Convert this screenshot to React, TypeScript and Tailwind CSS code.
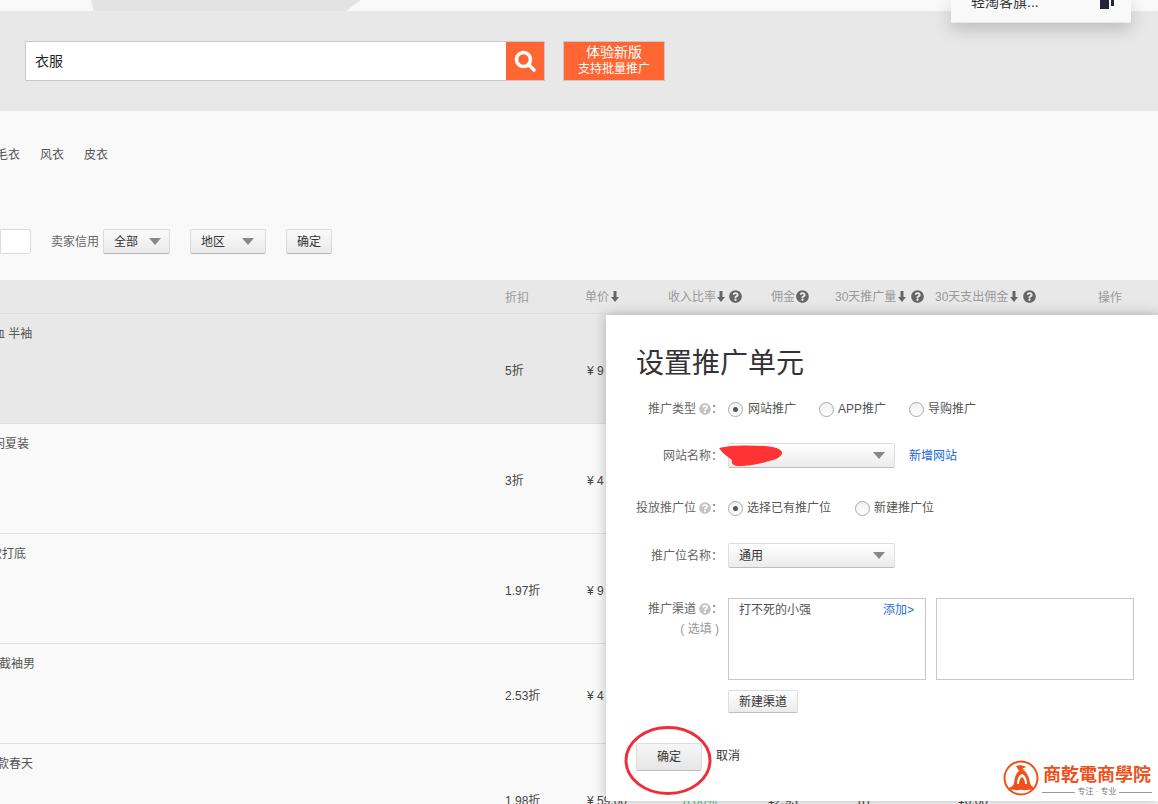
import React from "react";
import { FaQuestionCircle } from "react-icons/fa";

const font = "[font-family:'Liberation_Sans','Noto_Sans_CJK_SC',sans-serif]";

function Arrow() {
  return (
    <svg width="8" height="11" viewBox="0 0 8 11" className="inline-block">
      <path d="M2.5 0h3v6H8L4 11 0 6h2.5z" fill="#666" />
    </svg>
  );
}

function Q({ c = "#666", s = 13 }: { c?: string; s?: number }) {
  return <FaQuestionCircle size={s} color={c} className="inline-block" />;
}

function Caret() {
  return (
    <svg width="12" height="7" viewBox="0 0 12 7">
      <path d="M0 0h12L6 7z" fill="#888" />
    </svg>
  );
}

function Radio({ on }: { on?: boolean }) {
  return (
    <span className="flex h-[15px] w-[15px] shrink-0 items-center justify-center rounded-full border border-[#a8a8a8] bg-gradient-to-b from-[#f0f0f0] to-white">
      {on && <span className="h-[5px] w-[5px] rounded-full bg-[#555]" />}
    </span>
  );
}

const rows = [
  { t: "血 半袖", off: "-ml-[7px]", d: "5折", p: "9", h: "h-[110px]", dt: "pt-[48px]", a: true },
  { t: "闲夏装", off: "-ml-[7px]", d: "3折", p: "4", h: "h-[110px]", dt: "pt-[48px]" },
  { t: "款打底", off: "-ml-[10px]", d: "1.97折", p: "9", h: "h-[110px]", dt: "pt-[48px]" },
  { t: "截袖男", off: "-ml-[1px]", d: "2.53折", p: "4", h: "h-[100px]", dt: "pt-[43px]" },
  { t: "款春天", off: "-ml-[3px]", d: "1.98折", p: "59.00", h: "h-[61px]", dt: "pt-[48px]", extra: { r: "8.00%", c: "¥2.93", n: "81", o: "¥0.00" } },
];

export default function App() {
  return (
    <div className={`relative h-[804px] w-[1158px] overflow-hidden bg-[#f9f9f9] text-[12px] ${font}`}>
      {/* top strip */}
      <div className="h-[11px] pl-[91px]">
        <div className="h-[11px] w-[270px] bg-[#e3e3e3] [clip-path:polygon(0_0,100%_0,94.5%_100%,1%_100%)]" />
      </div>

      {/* search band */}
      <div className="flex h-[100px] items-center bg-[#e8e8e8] pl-[25px]">
        <div className="flex h-[40px] w-[520px] border border-[#c8c8c8] bg-white">
          <div className="flex flex-1 items-center pl-[9px] text-[14px] text-[#222]">衣服</div>
          <div className="flex w-[38px] items-center justify-center bg-[#ff6633]">
            <svg width="24" height="24" viewBox="0 0 24 24" fill="none" stroke="white" strokeLinecap="round">
              <circle cx="10.5" cy="10.5" r="7" strokeWidth="3.6" />
              <path d="M16 16l5 5" strokeWidth="3.6" />
            </svg>
          </div>
        </div>
        <div className="ml-[18px] flex h-[40px] w-[102px] flex-col items-center justify-center border border-[#c8c8c8] bg-[#ff6633] text-white">
          <div className="text-[14px] leading-[17px]">体验新版</div>
          <div className="text-[12px] leading-[17px]">支持批量推广</div>
        </div>
      </div>

      {/* filter area */}
      <div className="h-[169px]">
        <div className="flex h-[88px] items-start gap-[20px] pt-[37px] text-[12px] leading-[14px] text-[#555]">
          <span className="-ml-[4px]">毛衣</span>
          <span>风衣</span>
          <span>皮衣</span>
        </div>
        <div className="mt-[30px] flex h-[25px] items-center">
          <div className="h-[25px] w-[31px] rounded-r-[2px] border border-[#dcdcdc] bg-white" />
          <span className="ml-[20px] w-[52px] text-[#666]">卖家信用</span>
          <div className="flex h-[25px] w-[67px] items-center justify-between rounded-[2px] border border-[#dadada] border-b-[#b5b5b5] bg-gradient-to-b from-[#fafafa] to-[#eaeaea] pl-[10px] pr-[8px] text-[#333]">
            全部
            <Caret />
          </div>
          <div className="ml-[20px] flex h-[25px] w-[76px] items-center justify-between rounded-[2px] border border-[#dadada] border-b-[#b5b5b5] bg-gradient-to-b from-[#fafafa] to-[#eaeaea] pl-[10px] pr-[11px] text-[#333]">
            地区
            <Caret />
          </div>
          <div className="ml-[20px] flex h-[25px] w-[46px] items-center justify-center rounded-[2px] border border-[#dadada] border-b-[#b5b5b5] bg-gradient-to-b from-[#fafafa] to-[#eaeaea] text-[#333]">
            确定
          </div>
        </div>
      </div>

      {/* table header */}
      <div className="flex h-[34px] items-center border-b border-[#dedede] bg-[#e8e8e8] text-[12px] text-[#999]">
        <span className="ml-[505px] w-[80px] pt-[2px]">折扣</span>
        <span className="flex w-[83px] items-center gap-[2px]">单价<Arrow /></span>
        <span className="flex w-[103px] items-center gap-[1px]">收入比率<Arrow /><span className="ml-[3px] flex"><Q /></span></span>
        <span className="flex w-[64px] items-center gap-[1px]">佣金<Q /></span>
        <span className="flex w-[100px] items-center gap-[2px]">30天推广量<Arrow /><span className="ml-[3px] flex"><Q /></span></span>
        <span className="flex w-[163px] items-center gap-[2px]">30天支出佣金<Arrow /><span className="ml-[3px] flex"><Q /></span></span>
        <span className="pt-[2px]">操作</span>
      </div>

      {/* rows */}
      {rows.map((r) => (
        <div key={r.t} className={`flex overflow-hidden border-b border-[#e0e0e0] ${r.h} ${r.a ? "bg-[#e8e8e8]" : ""}`}>
          <div className="w-[505px] shrink-0 overflow-hidden pt-[11px] text-[#555]">
            <div className={r.off}>{r.t}</div>
          </div>
          <div className={`w-[82px] shrink-0 text-[#444] ${r.dt}`}>{r.d}</div>
          <div className={`w-[96px] shrink-0 text-[#444] ${r.dt}`}>
            <span className="inline-block w-[10px]">¥</span>
            {r.p}
          </div>
          {r.extra && (
            <>
              <div className={`w-[85px] shrink-0 text-[#5bb98c] ${r.dt}`}>{r.extra.r}</div>
              <div className={`w-[90px] shrink-0 text-[#444] ${r.dt}`}>{r.extra.c}</div>
              <div className={`w-[100px] shrink-0 text-[#444] ${r.dt}`}>{r.extra.n}</div>
              <div className={`shrink-0 text-[#444] ${r.dt}`}>{r.extra.o}</div>
            </>
          )}
        </div>
      ))}

      {/* popover clipped by the top edge */}
      <div className="absolute left-[951px] top-0 flex h-[23px] w-[180px] items-start justify-between border-b border-[#e8e8e8] bg-[#f9f9f9] pl-[20px] pr-[17px] shadow-[0_6px_18px_rgba(0,0,0,0.2)]">
        <span className="-mt-[8px] text-[14px] leading-[20px] text-[#333]">轻淘客旗...</span>
        <div className="flex items-start gap-[2px]">
          <div className="h-[9px] w-[9px] bg-[#26263a]" />
          <div className="h-[6px] w-[3px] bg-[#26263a]" />
        </div>
      </div>

      {/* modal */}
      <div className="absolute left-[606px] top-[315px] h-[486px] w-[552px] bg-white pl-[30px] pt-[31px] text-[12px] text-[#555] shadow-[0_0_12px_rgba(0,0,0,0.25)]">
        <div className="text-[28px] leading-[36px] text-[#333]">设置推广单元</div>

        <div className="mt-[17px] flex h-[20px] items-center">
          <div className="flex w-[87px] shrink-0 items-center justify-end whitespace-nowrap text-[#666]">推广类型<span className="ml-[3px] flex"><Q c="#c4c4c4" s={12} /></span>：</div>
          <span className="ml-[5px] flex items-center gap-[5px]"><Radio on />网站推广</span>
          <span className="ml-[23px] flex items-center gap-[4px]"><Radio />APP推广</span>
          <span className="ml-[23px] flex items-center gap-[4px]"><Radio />导购推广</span>
        </div>

        <div className="mt-[24px] flex h-[25px] items-center">
          <div className="w-[87px] shrink-0 whitespace-nowrap text-right text-[#666]">网站名称：</div>
          <div className="ml-[5px] flex h-[25px] w-[167px] items-center justify-end rounded-[2px] border border-[#dedede] border-b-[#bdbdbd] bg-gradient-to-b from-white to-[#ebebeb] pr-[9px]"><Caret /></div>
          <span className="ml-[14px] text-[#1a66e0]">新增网站</span>
        </div>

        <div className="mt-[30px] flex h-[20px] items-center">
          <div className="flex w-[87px] shrink-0 items-center justify-end whitespace-nowrap text-[#666]">投放推广位<span className="ml-[3px] flex"><Q c="#c4c4c4" s={12} /></span>：</div>
          <span className="ml-[5px] flex items-center gap-[4px]"><Radio on />选择已有推广位</span>
          <span className="ml-[24px] flex items-center gap-[4px]"><Radio />新建推广位</span>
        </div>

        <div className="mt-[25px] flex h-[25px] items-center">
          <div className="w-[87px] shrink-0 whitespace-nowrap text-right text-[#666]">推广位名称：</div>
          <div className="ml-[5px] flex h-[25px] w-[167px] items-center justify-between rounded-[2px] border border-[#dedede] border-b-[#bdbdbd] bg-gradient-to-b from-white to-[#ebebeb] pl-[10px] pr-[9px] text-[#333]">通用<Caret /></div>
        </div>

        <div className="mt-[30px] flex items-start">
          <div className="w-[87px] shrink-0 pt-[1px] text-right leading-[20px] text-[#666]">
            <div className="flex items-center justify-end whitespace-nowrap">推广渠道<span className="ml-[3px] flex"><Q c="#c4c4c4" s={12} /></span>：</div>
            <div className="whitespace-nowrap pr-[4px] text-[#999]">( 选填 )</div>
          </div>
          <div className="ml-[5px]">
            <div className="flex gap-[10px]">
              <div className="flex h-[82px] w-[198px] items-start justify-between border border-[#c8c8c8] pl-[10px] pr-[11px] pt-[3px] leading-[16px]">
                <span className="text-[#555]">打不死的小强</span>
                <span className="text-[#2a70e0]">添加&gt;</span>
              </div>
              <div className="h-[82px] w-[198px] border border-[#c8c8c8]" />
            </div>
            <div className="mt-[10px] flex h-[23px] w-[70px] items-center justify-center rounded-[2px] border border-[#dedede] border-b-[#bdbdbd] bg-gradient-to-b from-white to-[#ebebeb] text-[#333]">新建渠道</div>
          </div>
        </div>

        <div className="mt-[30px] flex items-start">
          <div className="flex h-[28px] w-[66px] items-center justify-center rounded-[2px] border border-[#dedede] border-b-[#bdbdbd] bg-gradient-to-b from-[#f6f6f6] to-[#e6e6e6] text-[#333]">确定</div>
          <span className="ml-[14px] leading-[26px] text-[#333]">取消</span>
        </div>
      </div>

      {/* hand-drawn red scribble over the site name */}
      <svg className="absolute left-[719px] top-[445px]" width="64" height="22" viewBox="0 0 64 22">
        <path d="M0 3C10 0 30 0 46 1C58 2 64 5 63 9C60 13 56 15 50 16C44 18 30 21 20 21C14 21 12 18 13 15C8 11 3 8 0 3Z" fill="#ff3333" />
      </svg>

      {/* red circle round the confirm button */}
      <svg className="absolute left-[624px] top-[725px]" width="88" height="71" viewBox="0 0 88 71" fill="none">
        <ellipse cx="44" cy="35.5" rx="42" ry="33" stroke="#ee2f3b" strokeWidth="3" />
      </svg>

      {/* watermark logo */}
      <div className="absolute left-[1003px] top-[760px] flex items-start gap-[3px]">
        <svg width="36" height="36" viewBox="0 0 36 36" fill="none">
          <circle cx="18" cy="18" r="16.5" stroke="#f0501a" strokeWidth="2" />
          <path d="M5 28c3-1 5-1 6-5 1-8 3-12 8-13 5 1 7 7 8 13 1 3 3 4 4 5l-3 2c-3-1-5 1-8 0s-5 1-8 0-5 1-7-2z" fill="#f0501a" />
          <path d="M13 6c3-1 7-1 10 1l-4 2 4 1-7 1z" fill="#f0501a" />
          <path d="M14 24c0-5 2-9 5-10 3 1 5 5 5 10h-2c0-3-1-6-3-7-2 1-3 4-3 7z" fill="white" />
        </svg>
        <div className="mt-[2px] flex w-[110px] flex-col items-center">
          <div className="whitespace-nowrap text-[18px] font-bold leading-[22px] text-[#f0501a] [font-family:'Noto_Sans_CJK_TC',serif]">商乾電商學院</div>
          <div className="mt-[3px] flex w-full items-center gap-[2px] text-[8px] leading-[10px] text-[#777]">
            <span className="h-px flex-1 bg-[#999]" />
            专注 · 专业
            <span className="h-px flex-1 bg-[#999]" />
          </div>
        </div>
      </div>
    </div>
  );
}
